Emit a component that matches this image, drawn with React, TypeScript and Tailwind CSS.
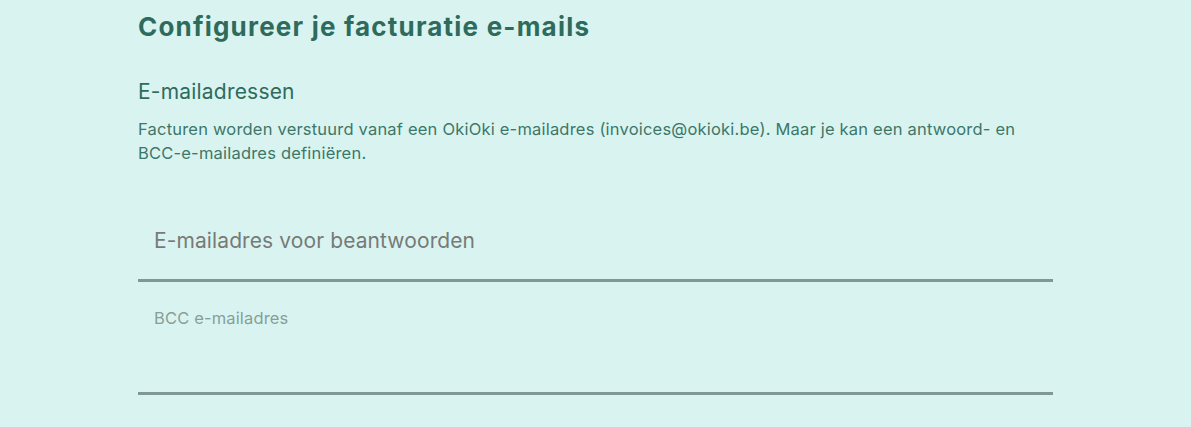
import React from 'react';

export default function App() {
  return (
    <div className="min-h-[427px] w-full bg-[#d9f4f0]">
      <div className="ml-[138px] w-[915px] pt-[9px]">
        <h1
          className="text-[26px] font-bold leading-[36px] tracking-[1.2px] text-[#2e6b5c]"
          style={{ fontFamily: 'Inter, "Open Sans", sans-serif' }}
        >
          Configureer je facturatie e-mails
        </h1>

        <section className="mt-[33px]" style={{ fontFamily: 'Inter, "Noto Sans", sans-serif' }}>
          <h2 className="text-[21px] leading-[28px] tracking-[0.2px] text-[#2f6b5d]">E-mailadressen</h2>
          <p className="mt-[11px] text-[16.5px] leading-[24px] tracking-[0.2px] text-[#3d7769]">
            Facturen worden verstuurd vanaf een OkiOki e-mailadres (invoices@okioki.be). Maar je kan een antwoord- en
            BCC-e-mailadres definiëren.
          </p>

          <div className="mt-[46px] h-[71px] border-b-[3px] border-[#809893] px-4 pt-[15px]">
            <span className="block text-[21px] leading-[30px] tracking-[0.1px] text-[#777a78]">
              E-mailadres voor beantwoorden
            </span>
          </div>

          <div className="h-[113px] border-b-[3px] border-[#809893] px-4 pt-[25px]">
            <span className="block text-[16.5px] leading-[22px] tracking-[0.15px] text-[#879e99]">BCC e-mailadres</span>
          </div>
        </section>
      </div>
    </div>
  );
}
